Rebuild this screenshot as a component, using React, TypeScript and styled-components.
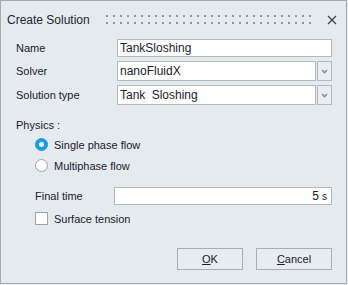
import React from 'react';
import styled, { createGlobalStyle } from 'styled-components';

const GlobalStyle = createGlobalStyle`
  html, body {
    margin: 0;
    padding: 0;
    background: #e4ebef;
  }
  * {
    box-sizing: border-box;
  }
`;

const Dialog = styled.div`
  width: 347px;
  height: 284px;
  border: 1px solid #a4aaae;
  background: #e4ebef;
  font-family: 'Liberation Sans', Arial, sans-serif;
  color: #1c2030;
  display: flex;
  flex-direction: column;
`;

const TitleBar = styled.div`
  height: 37px;
  padding: 0 9px 0 6px;
  display: flex;
  align-items: center;
  > span {
    font-size: 12px;
    color: #1d2438;
  }
`;

const Grip = styled.div`
  flex: 1;
  height: 9px;
  margin: 0 11px 0 16px;
  background-image:
    linear-gradient(transparent 2px, #e4ebef 2px),
    linear-gradient(90deg, #8e969b 2px, transparent 2px);
  background-size: 7px 7px;
`;

const CloseButton = styled.button`
  width: 11px;
  height: 11px;
  padding: 0;
  border: none;
  background: none;
  display: flex;
  align-items: center;
  justify-content: center;
`;

const Body = styled.div`
  padding: 1px 14px 0 15px;
  display: flex;
  flex-direction: column;
  flex: 1;
`;

const FieldGrid = styled.div`
  display: grid;
  grid-template-columns: 101px 1fr;
  grid-template-rows: 18px 20px 20px;
  row-gap: 4px;
  align-items: center;
`;

const Label = styled.label`
  font-size: 11px;
`;

const TextBox = styled.div<{ $align?: 'left' | 'right' }>`
  height: 100%;
  background: #fff;
  border: 1px solid #b3b8bc;
  padding: 0 4px 0 2px;
  font-size: 12px;
  display: flex;
  align-items: center;
  justify-content: ${(p) => (p.$align === 'right' ? 'flex-end' : 'flex-start')};
  white-space: nowrap;
  overflow: hidden;
`;

const Combo = styled.div`
  height: 100%;
  display: flex;
  gap: 1px;
  > div:first-child {
    flex: 1;
  }
`;

const DropButton = styled.div`
  width: 15px;
  height: 100%;
  border: 1px solid #b3b8bc;
  background: #e7edf0;
  display: flex;
  align-items: center;
  justify-content: center;
`;

const SectionTitle = styled.div`
  margin-top: 14px;
  font-size: 11px;
  line-height: 13px;
`;

const OptionList = styled.div`
  margin-top: 6px;
  padding-left: 19px;
  display: flex;
  flex-direction: column;
  gap: 8px;
`;

const Option = styled.div`
  display: flex;
  align-items: center;
  gap: 6px;
  font-size: 11px;
  height: 13px;
`;

const Radio = styled.span<{ $checked?: boolean }>`
  width: 13px;
  height: 13px;
  border-radius: 50%;
  background: ${(p) => (p.$checked ? '#1a9be3' : '#fff')};
  border: 1px solid ${(p) => (p.$checked ? '#1a9be3' : '#9da3a7')};
  display: flex;
  align-items: center;
  justify-content: center;
  &::after {
    content: '';
    width: 5px;
    height: 5px;
    border-radius: 50%;
    background: #fff;
    display: ${(p) => (p.$checked ? 'block' : 'none')};
  }
`;

const CheckBox = styled.span`
  width: 13px;
  height: 13px;
  background: #fff;
  border: 1px solid #9da3a7;
`;

const TimeRow = styled.div`
  margin-top: 15px;
  padding-left: 19px;
  display: grid;
  grid-template-columns: 79px 1fr;
  height: 18px;
  align-items: center;
`;

const CheckRow = styled(Option)`
  margin-top: 7px;
  padding-left: 19px;
`;

const Unit = styled.span`
  font-size: 10px;
  margin-left: 3px;
`;

const Footer = styled.div`
  margin-top: 23px;
  display: flex;
  justify-content: flex-end;
  gap: 13px;
`;

const Button = styled.button<{ $width: number }>`
  width: ${(p) => p.$width}px;
  height: 22px;
  border: 1px solid #a9aeb2;
  background: #e6ecef;
  font-family: 'Liberation Sans', Arial, sans-serif;
  font-size: 11px;
  color: #1c2030;
  padding: 0;
`;

const Chevron = () => (
  <svg width="7" height="5" viewBox="0 0 7 5">
    <path d="M1 1 L3.5 3.5 L6 1" fill="none" stroke="#8a9297" strokeWidth="1.6" />
  </svg>
);

const App: React.FC = () => {
  return (
    <>
      <GlobalStyle />
      <Dialog>
        <TitleBar>
          <span>Create Solution</span>
          <Grip />
          <CloseButton aria-label="Close">
            <svg width="10" height="10" viewBox="0 0 10 10">
              <path d="M1 1 L9 9 M9 1 L1 9" stroke="#3a3f47" strokeWidth="1.2" />
            </svg>
          </CloseButton>
        </TitleBar>
        <Body>
          <FieldGrid>
            <Label>Name</Label>
            <TextBox>TankSloshing</TextBox>
            <Label>Solver</Label>
            <Combo>
              <TextBox>nanoFluidX</TextBox>
              <DropButton>
                <Chevron />
              </DropButton>
            </Combo>
            <Label>Solution type</Label>
            <Combo>
              <TextBox style={{ wordSpacing: '3px' }}>Tank Sloshing</TextBox>
              <DropButton>
                <Chevron />
              </DropButton>
            </Combo>
          </FieldGrid>

          <SectionTitle>Physics :</SectionTitle>
          <OptionList>
            <Option>
              <Radio $checked />
              <span>Single phase flow</span>
            </Option>
            <Option>
              <Radio />
              <span>Multiphase flow</span>
            </Option>
          </OptionList>

          <TimeRow>
            <Label>Final time</Label>
            <TextBox $align="right">
              5<Unit>s</Unit>
            </TextBox>
          </TimeRow>
          <CheckRow>
            <CheckBox />
            <span>Surface tension</span>
          </CheckRow>

          <Footer>
            <Button $width={66}>
              <u>O</u>K
            </Button>
            <Button $width={76}>
              <u>C</u>ancel
            </Button>
          </Footer>
        </Body>
      </Dialog>
    </>
  );
};

export default App;
